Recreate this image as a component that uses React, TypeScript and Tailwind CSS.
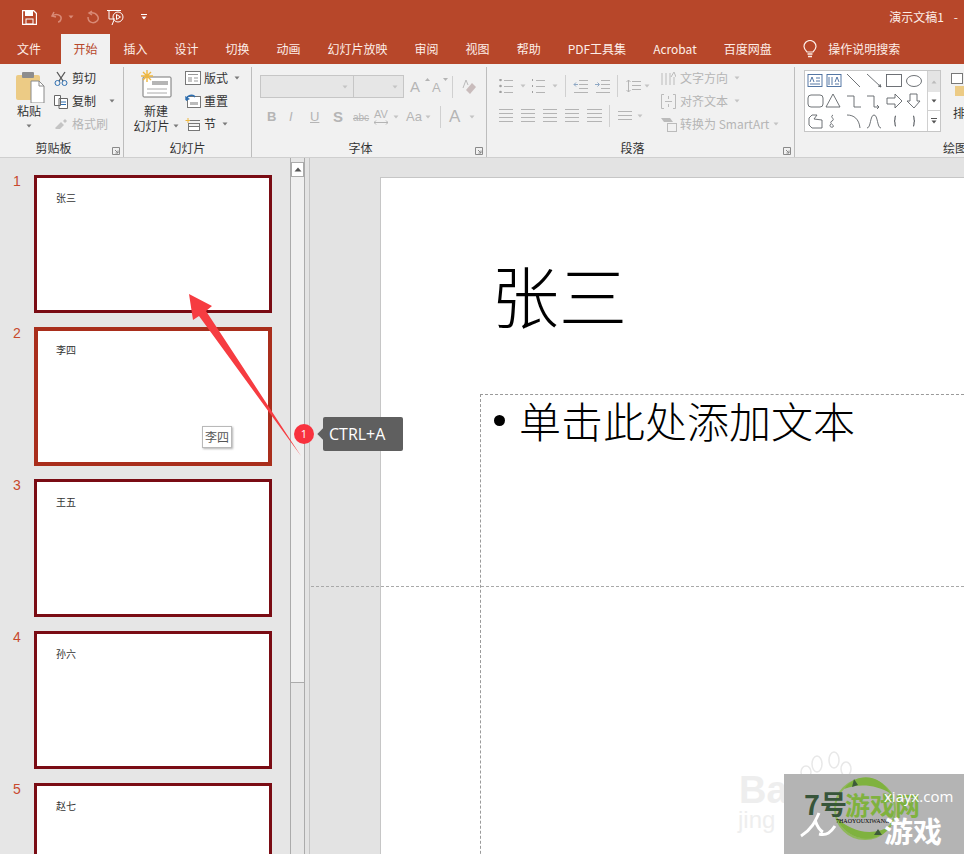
import React from "react";

const FONT = '"Noto Sans CJK SC", "Noto Sans", sans-serif';
const G = "#b4b4b4";

function Svg({ w, h, children, className = "" }: { w: number; h: number; children: React.ReactNode; className?: string }) {
  return (
    <svg width={w} height={h} viewBox={`0 0 ${w} ${h}`} fill="none" className={`shrink-0 ${className}`}>
      {children}
    </svg>
  );
}

function Caret({ c = "#7a7a7a" }: { c?: string }) {
  return (
    <Svg w={6} h={4}>
      <path d="M0.5 0.5h5L3 3.5z" fill={c} />
    </Svg>
  );
}

function Launcher({ c = "#8a8a8a" }: { c?: string }) {
  return (
    <Svg w={8} h={8}>
      <path d="M.5 .5h7v7h-7z M3 3l3 3M6 3.500V6H3.500" stroke={c} strokeWidth="1" />
    </Svg>
  );
}

function Lines({ w, n = 4, gap = 4, c = G }: { w: number; n?: number; gap?: number; c?: string }) {
  return (
    <Svg w={w} h={(n - 1) * gap + 2}>
      {Array.from({ length: n }).map((_, i) => (
        <path key={i} d={`M0 ${i * gap + 0.5}h${w}`} stroke={c} />
      ))}
    </Svg>
  );
}

function ListIcon({ numbered }: { numbered?: boolean }) {
  return (
    <Svg w={14} h={14}>
      {[1, 7, 13].map((y) =>
        numbered ? (
          <path key={y} d={`M1.500 ${y - 1}v2`} stroke="#a0a0a0" />
        ) : (
          <circle key={y} cx="1.500" cy={y} r="1.300" fill="#a0a0a0" />
        )
      )}
      {[1, 7, 13].map((y) => (
        <path key={y} d={`M5 ${y + 0.5}h9`} stroke={G} />
      ))}
    </Svg>
  );
}

function IndentIcon({ right }: { right?: boolean }) {
  return (
    <Svg w={15} h={14}>
      <path d="M6 1.500h9M6 5.500h9M6 9.500h9M1 13.500h14" stroke={G} />
      <path d={right ? "M0 5.500h4M2.500 3.500l2 2-2 2" : "M1 5.500h4M3 3.500l-2 2 2 2"} stroke="#8fa8c4" />
    </Svg>
  );
}

function Tab({ t, active }: { t: string; active?: boolean }) {
  return (
    <div
      className={
        active
          ? "h-[30px] w-[49px] ml-[6.5px] bg-[#f1f1f1] text-[#b7472a] text-[12px] flex items-center justify-center"
          : "h-[30px] px-[13.5px] text-[#fdeee8] text-[12px] flex items-center whitespace-nowrap"
      }
    >
      {t}
    </div>
  );
}

function Thumb({ n, name, selected, tip }: { n: number; name: string; selected?: boolean; tip?: boolean }) {
  return (
    <div className="flex shrink-0 h-[138px]">
      <div className="w-[34px] pl-[13px] text-[14px] leading-[14px] -mt-[1px] text-[#c8492d]" style={{ fontFamily: '"Liberation Sans", sans-serif' }}>
        {n}
      </div>
      <div
        className={
          selected
            ? "relative w-[238px] h-[139px] bg-white border-[4px] border-[#a92e1c] pl-[18px] pt-[12px]"
            : "relative w-[238px] h-[138px] bg-white border-[3px] border-[#7a0c14] pl-[19px] pt-[13px]"
        }
      >
        <div className="text-[10px] leading-[14px] text-[#333]">{name}</div>
        {tip && (
          <div className="absolute left-[164px] top-[95px] w-[30px] h-[22px] bg-white border border-[#b9b9b9] shadow-[1px_1px_2px_rgba(0,0,0,0.3)] text-[12px] leading-[20px] text-center text-[#555]">
            {name}
          </div>
        )}
      </div>
    </div>
  );
}

function Gallery() {
  const s = "#5f6368";
  return (
    <div className="w-[137px] h-[62px] bg-white border border-[#c6c6c6] flex mt-[3px] ml-[9px]">
      <Svg w={122} h={60}>
        <g stroke={s} strokeWidth="0.9">
          <rect x="3" y="3.500" width="14" height="12" stroke="#44699b" />
          <path d="M5 11l2-5 2 5M11 7h4M11 10h4M5 13h10" stroke="#44699b" />
          <rect x="22" y="3.500" width="14" height="12" stroke="#44699b" />
          <path d="M24 6v8M27 6v8M30 11l2-5 2 5M30 13h4" stroke="#44699b" />
          <path d="M42 3l13 13M62 3l14 13M76 16l-3-1M76 16l-1-3" />
          <rect x="81.500" y="3.500" width="15" height="12" />
          <ellipse cx="109" cy="10" rx="7.500" ry="5.500" />
          <rect x="3" y="24" width="15" height="12" rx="3" />
          <path d="M28 23l7 13H21zM42 25h7v11h7M62 25h7v11h5M74 36l-2-2M74 36l-2 2" />
          <path d="M82 27h8v-4l7 7-7 7v-4h-8zM105 23h7v7h3l-6 7-7-7h3z" />
          <path d="M4 47l3-3h5l-3 4 8 1v8H7l-3-3zM28 44c-4 2 3 4-1 6s3 4 1 6c-3 1-4-2-2-3M42 44c7 0 12 4 13 13M62 57c4 0 3-13 7-13s3 13 7 13" />
          <path d="M91 45c-2 0 0 5-2 5 2 0 0 5 2 5M108 45c2 0 0 5 2 5-2 0 0 5-2 5" strokeWidth="1.200" />
        </g>
      </Svg>
      <div className="w-[14px] border-l border-[#d0d0d0] flex flex-col">
        <div className="h-[21px] bg-[#e4e4e4] flex items-center justify-center">
          <Svg w={6} h={4}>
            <path d="M3 .5l2.500 3h-5z" fill="#bbb" />
          </Svg>
        </div>
        <div className="h-[19px] flex items-center justify-center border-b border-[#d0d0d0]">
          <Caret c="#555" />
        </div>
        <div className="flex-1 flex flex-col items-center justify-center gap-[1px]">
          <div className="w-[6px] h-[1px] bg-[#555]" />
          <Caret c="#555" />
        </div>
      </div>
    </div>
  );
}

function RibbonGroup({ w, label, launcher, labelClass = "", children }: { w: number; label: string; launcher?: boolean; labelClass?: string; children: React.ReactNode }) {
  return (
    <div className="relative shrink-0 h-[90px] border-r border-[#bdbdbd] flex flex-col" style={{ width: w }}>
      <div className="flex-1 flex min-h-0">{children}</div>
      <div className={`h-[22px] pt-[3px] flex items-center justify-center text-[12px] text-[#333] ${labelClass}`}>{label}</div>
      {launcher && (
        <div className="absolute right-[3px] bottom-[2px]">
          <Launcher />
        </div>
      )}
    </div>
  );
}

function Ribbon() {
  const dis = "text-[#b5b5b5]";
  const cc = "#c4c4c4";
  return (
    <div className="h-[94px] bg-[#f1f1f1] border-b border-[#cfcfcf] flex pt-[3px] text-[12px] text-[#333] overflow-hidden">
      {/* clipboard */}
      <RibbonGroup w={124} label="剪贴板" launcher labelClass="pr-[16px]">
        <div className="w-[54px] pl-[4px] flex flex-col items-center pt-[3px] shrink-0">
          <div className="ml-[2px]">
            <Svg w={29} h={33}>
              <rect x="0" y="5" width="24" height="25" rx="2" fill="#eccb85" />
              <rect x="6" y="2" width="12" height="6" rx="1" fill="#8d8d8d" />
              <path d="M15 11h8l5 5v17H15z" fill="#fff" stroke="#8a8a8a" />
              <path d="M23 11v5h5" stroke="#8a8a8a" />
            </Svg>
          </div>
          <div className="leading-[16px]">粘贴</div>
          <div className="mt-[5px]">
            <Caret />
          </div>
        </div>
        <div className="flex flex-col pt-[3px] gap-[7px]">
          <div className="flex items-center gap-[4px] h-[16px]">
            <Svg w={14} h={15}>
              <path d="M3 1l6 9M11 1L5 10" stroke="#555" strokeWidth="1.300" />
              <circle cx="3.500" cy="12" r="2.500" stroke="#2f6fb0" />
              <circle cx="10.500" cy="12" r="2.500" stroke="#2f6fb0" />
            </Svg>
            <span>剪切</span>
          </div>
          <div className="flex items-center gap-[4px] h-[16px]">
            <Svg w={14} h={15}>
              <path d="M.5 1.500h6v10h-6zM5 4.500h8.500v10H5z" fill="#fff" stroke="#666" />
              <path d="M7 8h5M7 10.500h5" stroke="#2f6fb0" />
            </Svg>
            <span>复制</span>
            <span className="ml-[9px]">
              <Caret />
            </span>
          </div>
          <div className={`flex items-center gap-[4px] h-[16px] ${dis}`}>
            <Svg w={14} h={12}>
              <path d="M1 10l6-6 3 3-4 4H2zM9 3l2-2 2 2-2 2z" fill="#c4c4c4" />
            </Svg>
            <span>格式刷</span>
          </div>
        </div>
      </RibbonGroup>

      {/* slides */}
      <RibbonGroup w={128} label="幻灯片">
        <div className="w-[60px] ml-[2px] flex flex-col items-center pt-[3px] shrink-0">
          <Svg w={32} h={28}>
            <rect x="3" y="7" width="28" height="20" rx="1" fill="#fff" stroke="#777" />
            <rect x="12" y="11" width="16" height="4" fill="#b5b5b5" />
            <path d="M7 19h20M7 23h20" stroke="#aaa" />
            <path d="M7 0v12M1 6h12M3 2l8 8M11 2l-8 8" stroke="#eeb740" strokeWidth="1.400" />
          </Svg>
          <div className="leading-[15px] mt-[5px]">新建</div>
          <div className="leading-[15px] flex items-center gap-[3px] whitespace-nowrap">
            幻灯片 <Caret />
          </div>
        </div>
        <div className="flex flex-col pt-[3px] gap-[7px] ml-[-1px]">
          <div className="flex items-center gap-[3px] h-[16px]">
            <Svg w={16} h={14}>
              <rect x=".5" y=".5" width="15" height="13" fill="#fff" stroke="#777" />
              <path d="M3 3.500h10" stroke="#999" />
              <rect x="3" y="6" width="4" height="5" fill="#c6c6c6" />
              <path d="M9 7h4M9 10h4" stroke="#999" />
            </Svg>
            <span>版式</span>
            <span className="ml-[3px]">
              <Caret />
            </span>
          </div>
          <div className="flex items-center gap-[3px] h-[16px]">
            <Svg w={16} h={14}>
              <rect x="2.500" y="2.500" width="13" height="11" fill="#fff" stroke="#777" />
              <rect x="5" y="8" width="8" height="3" fill="#bbb" />
              <path d="M1 6c1-5 7-6 9-3" stroke="#2f6fb0" strokeWidth="1.600" />
              <path d="M0 2l1 5 4-2z" fill="#2f6fb0" />
            </Svg>
            <span>重置</span>
          </div>
          <div className="flex items-center gap-[3px] h-[16px]">
            <Svg w={16} h={14}>
              <path d="M3 1v5M.5 3.500h5" stroke="#eeb740" />
              <path d="M5 3.500h10" stroke="#777" />
              <rect x="3.500" y="6.500" width="11" height="3" stroke="#777" />
              <rect x="3.500" y="9.500" width="11" height="4" stroke="#777" fill="#fff" />
            </Svg>
            <span>节</span>
            <span className="ml-[3px]">
              <Caret />
            </span>
          </div>
        </div>
      </RibbonGroup>

      {/* font */}
      <RibbonGroup w={235} label="字体" launcher labelClass="pr-[17px]">
        <div className={`pl-[8px] pt-[8px] flex flex-col ${dis}`}>
          <div className="flex items-center h-[23px]">
            <div className="w-[94px] h-[23px] bg-[#e6e6e6] border border-[#c6c6c6] flex items-center justify-end pr-[5px]">
              <Caret c={cc} />
            </div>
            <div className="w-[50px] h-[23px] bg-[#e6e6e6] border border-[#c6c6c6] border-l-0 flex items-center justify-end pr-[5px]">
              <Caret c={cc} />
            </div>
            <div className="ml-[6px] w-[15px] text-[15px] leading-none" style={{ fontFamily: '"Liberation Sans", sans-serif' }}>A</div>
            <div className="w-[6px] self-start mt-[3px]"><Svg w={5} h={3}><path d="M2.500 0l2.500 3H0z" fill={G} /></Svg></div>
            <div className="w-[11px] ml-[1px] text-[13px] leading-none mt-[2px]" style={{ fontFamily: '"Liberation Sans", sans-serif' }}>A</div>
            <div className="w-[6px] self-start mt-[3px]"><Svg w={5} h={3}><path d="M0 0h5L2.500 3z" fill={G} /></Svg></div>
            <div className="ml-[3px] w-px h-[22px] bg-[#d0d0d0]" />
            <div className="ml-[9px]">
              <Svg w={15} h={16}>
                <path d="M1 9L4 1l2 5" stroke="#bbb" />
                <path d="M4 11l6-7 4 4-6 7z" fill="#c9bcbc" />
              </Svg>
            </div>
          </div>
          <div className="flex items-center h-[22px] mt-[8px]" style={{ fontFamily: '"Liberation Sans", sans-serif' }}>
            <span className="ml-[7px] w-[22px] text-[13px] font-bold">B</span>
            <span className="w-[21px] text-[13px] italic">I</span>
            <span className="w-[23px] text-[13px] underline">U</span>
            <span className="w-[20px] text-[15px] font-bold">S</span>
            <span className="w-[18px] text-[10px] line-through">abc</span>
            <div className="w-[20px] flex flex-col items-center">
              <span className="text-[11px] leading-[11px]">AV</span>
              <Svg w={14} h={5}>
                <path d="M0 2.500h14M2 .5l-2 2 2 2M12 .5l2 2-2 2" stroke={G} />
              </Svg>
            </div>
            <span className="ml-[2px]"><Caret c={cc} /></span>
            <span className="ml-[7px] w-[19px] text-[13px]">Aa</span>
            <Caret c={cc} />
            <div className="ml-[9px] w-px h-[22px] bg-[#d0d0d0]" />
            <span className="ml-[8px] w-[20px] text-[17px]">A</span>
            <Caret c={cc} />
          </div>
        </div>
      </RibbonGroup>

      {/* paragraph */}
      <RibbonGroup w={308} label="段落" launcher labelClass="pr-[16px]">
        <div className="flex">
          <div className="pl-[12px] pt-[8px] w-[174px] flex flex-col shrink-0">
            <div className="flex items-center h-[22px]">
              <ListIcon />
              <span className="ml-[7px] mr-[5px]"><Caret c={cc} /></span>
              <ListIcon numbered />
              <span className="ml-[7px]"><Caret c={cc} /></span>
              <div className="ml-[7px] w-px h-[22px] bg-[#d0d0d0]" />
              <span className="ml-[7px]"><IndentIcon /></span>
              <span className="ml-[7px]"><IndentIcon right /></span>
              <div className="ml-[7px] w-px h-[22px] bg-[#d0d0d0]" />
              <span className="ml-[8px]">
                <Svg w={15} h={14}>
                  <path d="M6 2.500h9M6 6.500h9M6 10.500h9M2.500 1v12M.5 3l2-2 2 2M.5 11l2 2 2-2" stroke={G} />
                </Svg>
              </span>
              <span className="ml-[3px]"><Caret c={cc} /></span>
            </div>
            <div className="flex items-center h-[22px] mt-[8px]">
              <Lines w={14} />
              <span className="ml-[8px]"><Lines w={14} /></span>
              <span className="ml-[8px]"><Lines w={14} /></span>
              <span className="ml-[8px]"><Lines w={14} /></span>
              <span className="ml-[8px]"><Lines w={15} /></span>
              <div className="ml-[7px] w-px h-[22px] bg-[#d0d0d0]" />
              <span className="ml-[8px]"><Lines w={14} n={3} /></span>
              <span className="ml-[5px]"><Caret c={cc} /></span>
            </div>
          </div>
          <div className={`flex flex-col pt-[3px] gap-[7px] ${dis}`}>
            <div className="flex items-center gap-[4px] h-[16px] whitespace-nowrap">
              <Svg w={15} h={15}>
                <path d="M1 2v12M5 2v12M9 2v12M13 6v8" stroke="#bbb" />
                <path d="M10 6l3-5 2 5" stroke="#bbb" />
              </Svg>
              <span>文字方向</span>
              <span className="ml-[2px]"><Caret c={cc} /></span>
            </div>
            <div className="flex items-center gap-[4px] h-[16px] whitespace-nowrap">
              <Svg w={15} h={15}>
                <path d="M3 .5H.5v14H3M12 .5h2.500v14H12M4 7.500h7M7.500 2v3M7.500 10v3" stroke="#bbb" />
              </Svg>
              <span>对齐文本</span>
              <span className="ml-[2px]"><Caret c={cc} /></span>
            </div>
            <div className="flex items-center gap-[3px] h-[16px] whitespace-nowrap">
              <Svg w={16} h={15}>
                <path d="M0 1h9l3 4H3z" fill="#bbb" />
                <rect x="6.500" y="6.500" width="9" height="8" stroke="#bbb" fill="#f1f1f1" />
              </Svg>
              <span>转换为 SmartArt</span>
              <span className="ml-[1px]"><Caret c={cc} /></span>
            </div>
          </div>
        </div>
      </RibbonGroup>

      {/* drawing */}
      <div className="flex-1 min-w-0 h-[90px] flex flex-col relative">
        <div className="flex-1 flex min-h-0">
          <Gallery />
          <div className="ml-[10px] pt-[6px] flex flex-col shrink-0">
            <div className="w-[12px] h-[11px] bg-white border border-[#777]" />
            <div className="w-[10px] h-[10px] ml-[4px] mt-[2px] bg-[#eccb85]" />
            <div className="mt-[9px] ml-[2px] leading-[16px]">排</div>
          </div>
        </div>
        <div className="h-[22px] pt-[3px] pl-[148px] flex items-center text-[12px] whitespace-nowrap">绘图</div>
      </div>
    </div>
  );
}

function Watermark() {
  return (
    <div className="absolute left-0 top-0 w-[964px] h-[854px] pointer-events-none overflow-hidden">
      <div className="absolute left-[739px] top-[770px] text-[38px] leading-[40px] font-bold text-[#eeeeee]" style={{ fontFamily: '"Liberation Sans", sans-serif' }}>Bai</div>
      <div className="absolute left-[738px] top-[806px] text-[24px] leading-[28px] text-[#eeeeee]" style={{ fontFamily: '"Liberation Sans", sans-serif' }}>jing</div>
      <div className="absolute left-[800px] top-[750px]">
        <Svg w={54} h={30}>
          <g stroke="#e8e8e8" strokeWidth="1.500">
            <ellipse cx="17" cy="14" rx="5" ry="8" />
            <ellipse cx="34" cy="10" rx="5" ry="8" />
            <ellipse cx="46" cy="19" rx="5" ry="7" />
            <ellipse cx="6" cy="22" rx="5" ry="6" />
          </g>
        </Svg>
      </div>
      <div className="absolute left-[784px] top-[774px] w-[180px] h-[80px] bg-[#b4b4b4]">
        <div className="absolute left-[48px] top-[1px]">
          <Svg w={66} h={68}>
            <circle cx="33" cy="34" r="30" stroke="#8fb85a" strokeWidth="2" />
            <path d="M12 14C26 -4 48 0 58 18C44 10 28 8 12 14z" fill="#7fb23f" />
            <path d="M4 42C14 66 44 72 60 50C42 62 20 58 4 42z" fill="#7fb23f" />
            <path d="M22 4l4 6-6 2zM50 60l-4-6-4 6z" fill="#3d5a3a" />
          </Svg>
        </div>
        <div className="absolute left-[20px] top-[15px] text-[27px] leading-[30px] font-bold text-[#37553a] whitespace-nowrap">7号</div>
        <div className="absolute left-[61px] top-[16px] text-[25px] leading-[28px] font-bold text-[#7fb23f] whitespace-nowrap">游戏网</div>
        <div className="absolute left-[100px] top-[13px] text-[15px] leading-[18px] text-white whitespace-nowrap" style={{ fontFamily: '"Open Sans", sans-serif' }}>xiayx.com</div>
        <div className="absolute left-[52px] top-[44px] text-[6px] leading-[6px] text-black whitespace-nowrap" style={{ fontFamily: '"Liberation Serif", serif' }}>7HAOYOUXIWANG</div>
        <div className="absolute left-[100px] top-[38px] text-[29px] leading-[36px] font-bold text-white whitespace-nowrap">游戏</div>
        <div className="absolute left-[15px] top-[38px]">
          <Svg w={38} h={26}>
            <path d="M2 24C12 18 16 10 20 1M20 22C28 24 32 20 36 14M16 8C18 14 20 18 24 20" stroke="#fff" strokeWidth="3" />
          </Svg>
        </div>
      </div>
    </div>
  );
}

export default function App() {
  return (
    <div className="relative w-[964px] h-[854px] overflow-hidden bg-[#e3e3e3] flex flex-col" style={{ fontFamily: FONT }}>
      {/* title bar */}
      <div className="h-[34px] bg-[#b7472a] flex items-center shrink-0 text-white">
        <div className="ml-[22px]">
          <Svg w={15} h={15}>
            <path d="M.5 .5h11l3 3v11H.5z" stroke="#fff" strokeWidth="1.300" />
            <rect x="3" y="1" width="8" height="5" fill="#fff" />
            <rect x="4" y="9" width="7" height="5" stroke="#fff" />
          </Svg>
        </div>
        <div className="ml-[14px]">
          <Svg w={12} h={12}>
            <path d="M3 1L1 5l4 1M1.500 5C5 2 11 4 10 8c-.5 2-2 3-3 3" stroke="#d98a76" strokeWidth="1.500" />
          </Svg>
        </div>
        <div className="ml-[5px]"><Caret c="#d98a76" /></div>
        <div className="ml-[12px]">
          <Svg w={14} h={14}>
            <path d="M6 1l-3 2 3 2M4 3C11 2 14 8 11 11c-3 3-9 2-9-4" stroke="#d98a76" strokeWidth="1.500" />
          </Svg>
        </div>
        <div className="ml-[7px]">
          <Svg w={18} h={17}>
            <path d="M0 1.500h14M2 2v8h6M5 16l2-5" stroke="#fff" />
            <circle cx="11" cy="8" r="5" stroke="#fff" />
            <path d="M9.500 5.500l4 2.500-4 2.500z" stroke="#fff" />
          </Svg>
        </div>
        <div className="ml-[16px] flex flex-col items-center gap-[1px]">
          <div className="w-[6px] h-px bg-white" />
          <Caret c="#fff" />
        </div>
        <div className="ml-auto mr-[6px] flex gap-[10px] text-[12px] text-[#fdeee8] whitespace-nowrap">
          <span>演示文稿1</span>
          <span>-</span>
        </div>
      </div>

      {/* tabs */}
      <div className="h-[30px] bg-[#b7472a] flex shrink-0 pl-[3.5px]">
        <Tab t="文件" />
        <Tab t="开始" active />
        <Tab t="插入" />
        <Tab t="设计" />
        <Tab t="切换" />
        <Tab t="动画" />
        <Tab t="幻灯片放映" />
        <Tab t="审阅" />
        <Tab t="视图" />
        <Tab t="帮助" />
        <Tab t="PDF工具集" />
        <Tab t="Acrobat" />
        <Tab t="百度网盘" />
        <div className="flex items-center ml-[18px] gap-[11px] text-[12px] text-[#fdeee8] whitespace-nowrap">
          <Svg w={14} h={18}>
            <path d="M4 12C2 10 1 9 1 6.500a6 6 0 0 1 12 0C13 9 12 10 10 12z" stroke="#fdeee8" strokeWidth="1.200" />
            <path d="M4.500 14h5M5 16.500h4" stroke="#fdeee8" strokeWidth="1.300" />
          </Svg>
          <span>操作说明搜索</span>
        </div>
      </div>

      <Ribbon />

      {/* body */}
      <div className="flex-1 flex min-h-0">
        <div className="w-[290px] shrink-0 bg-[#e6e6e6] pt-[17px] flex flex-col gap-[14px] overflow-hidden">
          <Thumb n={1} name="张三" />
          <Thumb n={2} name="李四" selected tip />
          <Thumb n={3} name="王五" />
          <Thumb n={4} name="孙六" />
          <Thumb n={5} name="赵七" />
        </div>
        <div className="w-[15px] shrink-0 bg-[#e6e6e6] border-x border-[#ababab] flex flex-col">
          <div className="mt-[4px] h-[15px] bg-white border border-[#ababab] flex items-center justify-center">
            <Svg w={8} h={5}>
              <path d="M4 .5l3.500 4h-7z" fill="#555" />
            </Svg>
          </div>
          <div className="h-[506px] bg-[#f0f0f0] border-b border-[#ababab]" />
        </div>
        <div className="w-[5px] shrink-0 border-r border-[#c4c4c4] bg-[#e3e3e3]" />
        <div className="relative flex-1 min-w-0 pl-[70px] pt-[19px]">
          <div className="h-full bg-white border-l border-t border-[#c6c6c6] overflow-hidden">
            <div className="pl-[110px] pt-[70px] h-[216px] text-[68px] leading-[92px] text-black whitespace-nowrap font-light">张三</div>
            <div className="ml-[99px] h-[500px] border-l border-t border-dashed border-[#9a9a9a] flex items-start text-[42px] leading-[52px] text-black whitespace-nowrap font-light">
              <span className="ml-[13px] mt-[20px] w-[11px] h-[11px] rounded-full bg-black shrink-0" />
              <span className="ml-[14px] -mt-[1px]">单击此处添加文本</span>
            </div>
          </div>
          <div className="absolute left-[1px] right-0 top-[428px] border-t border-dashed border-[#a9a9a9]" />
        </div>
      </div>

      {/* annotation */}
      <div className="absolute left-0 top-0 pointer-events-none">
        <svg width="964" height="854" viewBox="0 0 964 854" fill="none">
          <path d="M189 294L212 306 206 311 301 456 199 316 193 320z" fill="#f63c41" />
        </svg>
      </div>
      <div className="absolute left-[294px] top-[424px] w-[20px] h-[20px] rounded-full bg-[#f8323e] text-white text-[11px] leading-[20px] text-center" style={{ fontFamily: '"Open Sans", sans-serif' }}>
        1
      </div>
      <div className="absolute left-[323px] top-[417px] w-[80px] h-[34px] rounded-[2px] bg-[#5f5f5f] text-white text-[16px] leading-[34px] pl-[6px]" style={{ fontFamily: '"Open Sans", sans-serif' }}>
        CTRL+A
        <div className="absolute left-[-4px] top-[13px] w-[8px] h-[8px] bg-[#5f5f5f] rotate-45" />
      </div>

      <Watermark />
    </div>
  );
}
